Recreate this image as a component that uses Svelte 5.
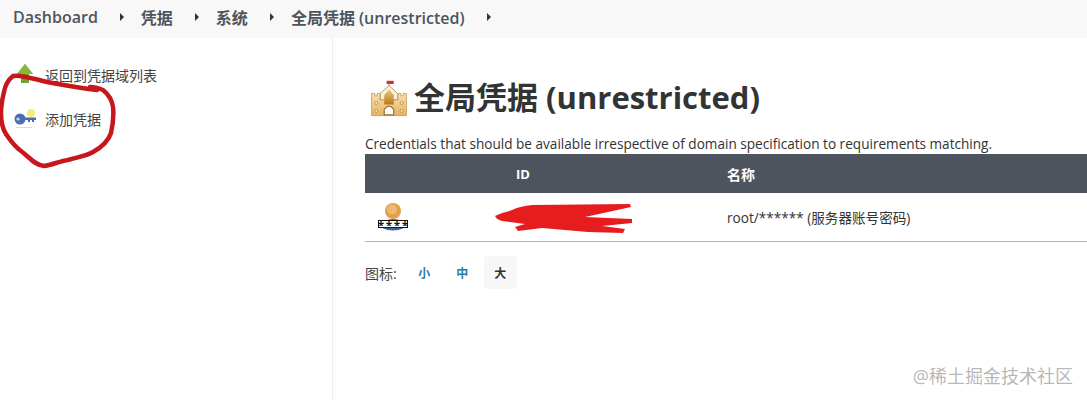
<script lang="ts">
  const crumbs = ["Dashboard", "凭据", "系统", "全局凭据 (unrestricted)"];
  const sizes = ["小", "中", "大"];
</script>

<div class="page">
  <nav class="crumbs">
    {#each crumbs as crumb}
      <span class="crumb">{crumb}</span>
      <span class="caret"></span>
    {/each}
  </nav>

  <div class="body">
    <aside class="side">
      <div class="task">
        <svg class="task-icon" viewBox="0 0 24 24" width="24" height="24">
          <path d="M12 1 L20 11 H16 V20 H8 V11 H4 Z" fill="#6fa52d" />
          <path d="M12 1 L20 11 H4 Z" fill="#86b83c" />
        </svg>
        <span>返回到凭据域列表</span>
      </div>
      <div class="task">
        <svg class="task-icon" viewBox="0 0 24 24" width="24" height="24">
          <circle cx="18" cy="6" r="4" fill="#f3ee7a" />
          <circle cx="7" cy="12" r="5.5" fill="#4a6db5" />
          <circle cx="5" cy="12" r="1.6" fill="#c8d4ee" />
          <path d="M11 10.5 H23 V13 H21 V15 H19 V13 H17 V15 H15 V13 H11 Z" fill="#4a6db5" />
          <path d="M3 20.5 H19" stroke="#d8dbe0" stroke-width="1" />
        </svg>
        <span>添加凭据</span>
      </div>
    </aside>

    <main class="main">
      <h1 class="title">
        <svg class="castle" viewBox="0 0 48 48" width="38" height="38">
          <defs>
            <linearGradient id="wall" x1="0" y1="0" x2="0" y2="1">
              <stop offset="0" stop-color="#f8dfb4" />
              <stop offset="1" stop-color="#e8b25f" />
            </linearGradient>
            <linearGradient id="keep" x1="0" y1="0" x2="0" y2="1">
              <stop offset="0" stop-color="#e9c67e" />
              <stop offset="1" stop-color="#b87a1e" />
            </linearGradient>
          </defs>
          <path d="M21 1 H30 V5 H21 Z" fill="#c9303a" />
          <path d="M24 4 V10" stroke="#8a6a30" stroke-width="1" />
          <path d="M2 17 H6 V20 H9 V17 H13 V25 H35 V17 H39 V20 H42 V17 H46 V45 H2 Z" fill="url(#wall)" stroke="#c79a48" stroke-width="1" />
          <path d="M13 25 V17 L24 7 L35 17 V25 Z" fill="#fbf0da" stroke="#b9873a" stroke-width="1" />
          <path d="M18 31 V19 L24 12 L30 19 V31 Z" fill="url(#keep)" />
          <path d="M18 44 V37 Q24 29 30 37 V44 Z" fill="#fff" stroke="#9a7434" stroke-width="1.5" />
          <circle cx="8" cy="29" r="2" fill="#fbe9bd" stroke="#b9873a" />
          <circle cx="40" cy="29" r="2" fill="#fbe9bd" stroke="#b9873a" />
          <circle cx="8" cy="39" r="2" fill="#fbe9bd" stroke="#b9873a" />
          <circle cx="40" cy="39" r="2" fill="#fbe9bd" stroke="#b9873a" />
        </svg>
        <span>全局凭据 (unrestricted)</span>
      </h1>
      <p class="desc">Credentials that should be available irrespective of domain specification to requirements matching.</p>

      <table class="creds">
        <thead>
          <tr>
            <th class="c-icon"></th>
            <th class="c-id">ID</th>
            <th class="c-name">名称</th>
          </tr>
        </thead>
        <tbody>
          <tr>
            <td class="c-icon">
              <svg viewBox="0 0 32 32" width="32" height="32">
                <path d="M5 27 Q6 18 16 18 Q26 18 27 27 Q16 32 5 27 Z" fill="#3f6595" />
                <circle cx="16" cy="10" r="8" fill="#e2a04c" />
                <circle cx="15" cy="8.5" r="5" fill="#efb970" />
                <rect x="1.5" y="19.5" width="29" height="7" fill="#fff" stroke="#111" />
                <text class="stars" x="17" y="27.5" text-anchor="middle">****</text>
              </svg>
            </td>
            <td class="c-id"></td>
            <td>root/****** (服务器账号密码)</td>
          </tr>
        </tbody>
      </table>

      <div class="icon-size">
        <span class="icon-label">图标:</span>
        {#each sizes as size, i}
          <span class="size" class:active={i === 2}>{size}</span>
        {/each}
      </div>
    </main>
  </div>

  <!-- hand-drawn marks on top of the shot -->
  <svg class="marks" width="1087" height="400" viewBox="0 0 1087 400">
    <path
      d="M97 90 C80 88 64 85 47 82 C34 79 20 74 13 76 C8 80 5 86 4 92 C2 100 1 106 1 113 C1 122 2 128 6 134 C10 140 14 146 21 151 C29 157 36 166 44 166 C52 165 60 161 68 160 C78 157 86 156 93 152 C102 147 108 142 111 133 C113 124 114 116 113 107 C112 100 108 94 103 90 C98 88 94 87 90 87"
      fill="none" stroke="#c8161d" stroke-width="4.5" stroke-linecap="round" stroke-linejoin="round"
    />
    <path
      d="M495 216 C500 213 506 212 512 210 C518 207 525 206 532 205 L630 204 L631 207 L585 217 L632 219 L632 223 L602 226 L625 229 L623 233 L588 232 L542 228 L518 231 L515 227 L525 224 L502 221 C498 220 496 218 495 216 Z"
      fill="#e61c1f"
    />
  </svg>

  <div class="watermark">@稀土掘金技术社区</div>
</div>

<style>
  :global(body) {
    margin: 0;
    background: #fff;
  }
  .page {
    position: relative;
    width: 1087px;
    height: 400px;
    overflow: hidden;
    font-family: "Open Sans", "Noto Sans CJK SC", sans-serif;
    color: #333;
    background: #fff;
  }
  .crumbs {
    display: flex;
    align-items: center;
    box-sizing: border-box;
    height: 38px;
    padding: 0 0 5px 13px;
    background: #f8f8f8;
    font-size: 16px;
    font-weight: 600;
    color: #4d545d;
  }
  .crumb {
    white-space: nowrap;
  }
  .caret {
    width: 0;
    height: 0;
    margin: 0 17px 0 22px;
    border-left: 4px solid #333;
    border-top: 4px solid transparent;
    border-bottom: 4px solid transparent;
  }
  .body {
    display: flex;
    height: 362px;
  }
  .side {
    width: 333px;
    flex: none;
    box-sizing: border-box;
    border-right: 1px solid #eee;
    padding: 21px 0 0 13px;
  }
  .task {
    display: flex;
    align-items: center;
    gap: 8px;
    height: 32px;
    margin-bottom: 12px;
    font-size: 14px;
    color: #444;
  }
  .task-icon {
    flex: none;
  }
  .main {
    flex: 1;
    min-width: 0;
    padding: 33px 0 0 32px;
  }
  .title {
    display: flex;
    align-items: center;
    margin: 0;
    height: 48px;
    font-size: 31px;
    font-weight: 700;
    color: #333;
    white-space: nowrap;
  }
  .castle {
    flex: none;
    margin: 8px 6px 0 5px;
  }
  .desc {
    margin: 15px 0 0;
    height: 20px;
    font-size: 13.6px;
    line-height: 19px;
    white-space: nowrap;
  }
  .creds {
    width: 722px;
    border-collapse: collapse;
    font-size: 13.6px;
  }
  .creds th {
    height: 39px;
    padding: 0;
    background: #4d545d;
    color: #fff;
    font-weight: 700;
    font-size: 13px;
    text-align: left;
  }
  .creds th.c-name {
    font-size: 14px;
  }
  .creds td {
    height: 48px;
    padding: 0;
    border-bottom: 1px solid #b5b5b5;
  }
  .c-icon {
    width: 151px;
    padding-left: 12px !important;
    box-sizing: border-box;
  }
  .creds td.c-icon svg {
    display: block;
  }
  .c-id {
    width: 211px;
  }
  .stars {
    font-size: 11px;
    font-weight: 700;
    letter-spacing: 2px;
    fill: #111;
  }
  .icon-size {
    display: flex;
    align-items: center;
    margin-top: 14px;
    font-size: 14px;
  }
  .icon-label {
    margin-right: 11px;
    color: #444;
  }
  .size {
    width: 33px;
    height: 33px;
    margin-right: 5px;
    display: flex;
    align-items: center;
    justify-content: center;
    border-radius: 4px;
    font-size: 12px;
    font-weight: 700;
    color: #2d7ba3;
  }
  .size.active {
    background: #f7f7f7;
    color: #333;
  }
  .marks {
    position: absolute;
    left: 0;
    top: 0;
    pointer-events: none;
  }
  .watermark {
    position: absolute;
    right: 14px;
    top: 362px;
    font-size: 18px;
    color: rgba(120, 120, 120, 0.55);
    white-space: nowrap;
  }
</style>
